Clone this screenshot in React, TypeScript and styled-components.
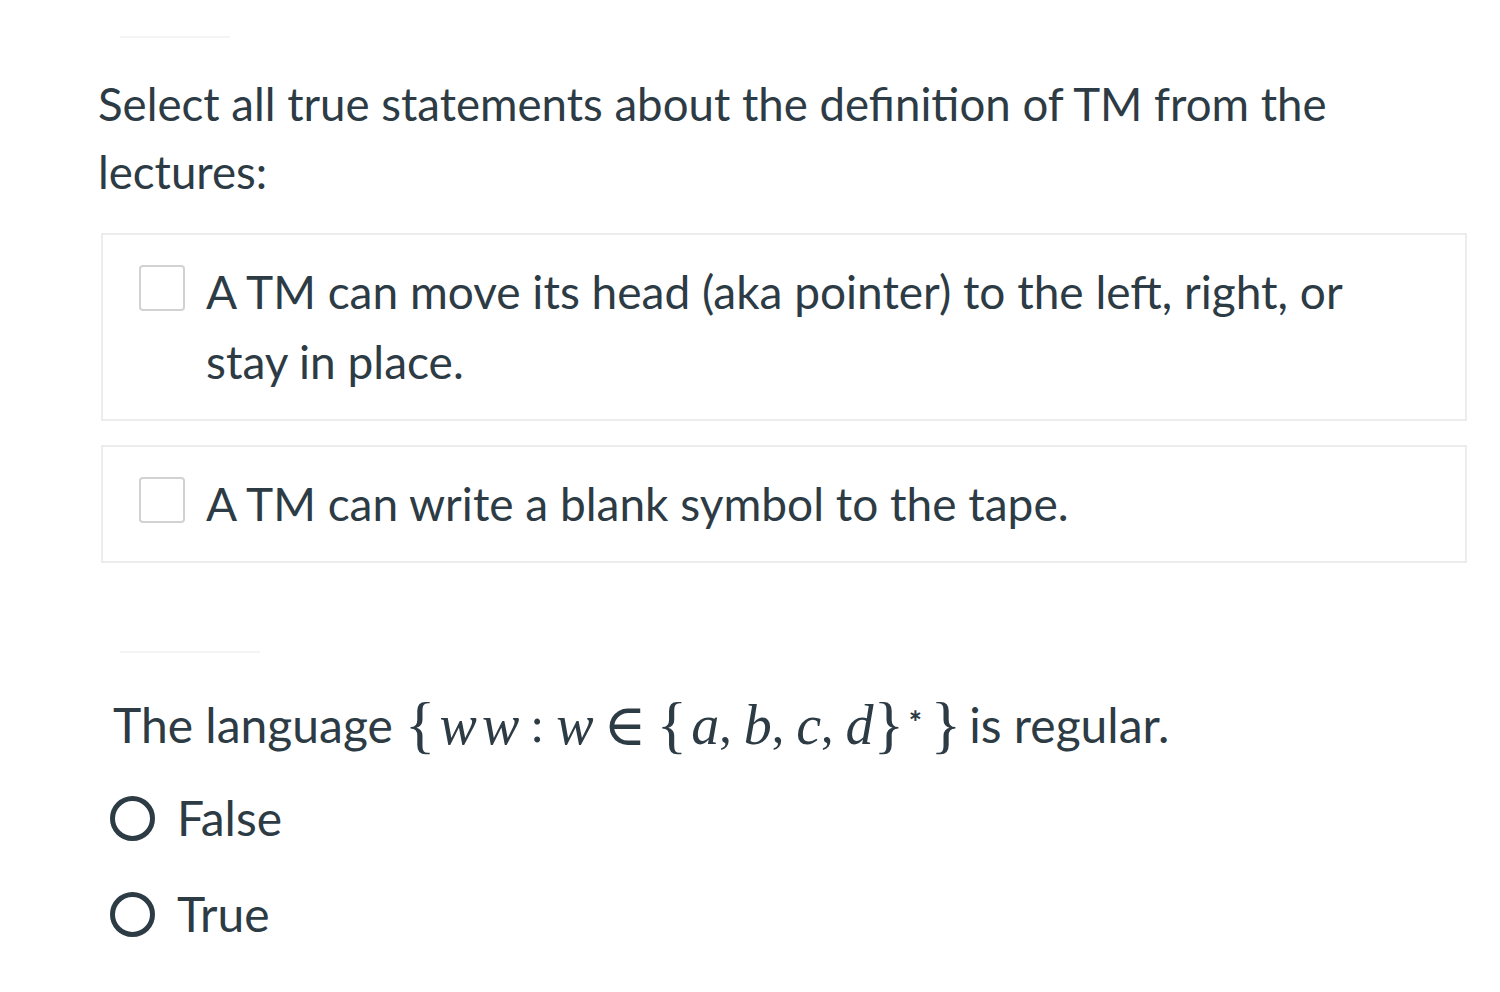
import React from "react";
import styled, { createGlobalStyle } from "styled-components";

const Global = createGlobalStyle`
  html, body { margin: 0; padding: 0; background: #ffffff; }
  body { font-family: Lato, "Open Sans", sans-serif; color: #2d3b45; }
`;

const Page = styled.div`
  width: 1500px;
  height: 992px;
  overflow: hidden;
  display: flex;
  flex-direction: column;
  padding: 36px 0 0 98px;
  box-sizing: border-box;
`;

const FaintRule = styled.div<{ $w: number; $ml: number }>`
  width: ${(p) => p.$w}px;
  margin-left: ${(p) => p.$ml}px;
  height: 2px;
  background: #f4f4f4;
`;

const QuestionText = styled.div`
  font-size: 45.6px;
  line-height: 68px;
  width: 1270px;
  margin-top: 32px;
`;

const Options = styled.div`
  display: flex;
  flex-direction: column;
  gap: 24px;
  margin-top: 27px;
  margin-left: 3px;
  width: 1366px;
`;

const OptionBox = styled.label`
  display: flex;
  align-items: flex-start;
  gap: 21px;
  border: 2px solid #ececec;
  padding: 22px 36px 22px 36px;
  box-sizing: border-box;
`;

const CheckBox = styled.span`
  flex: none;
  width: 46px;
  height: 46px;
  box-sizing: border-box;
  border: 2px solid #d2d2d2;
  border-radius: 4px;
  margin-top: 8px;
  background: #fff;
`;

const OptionText = styled.span`
  font-size: 46px;
  line-height: 70px;
  max-width: 1190px;
`;

const Question2 = styled.div`
  margin-top: 88px;
  margin-left: 22px;
  display: flex;
  flex-direction: column;
`;

const Q2Text = styled.div`
  font-size: 48px;
  line-height: 68px;
  margin-top: 38px;
  margin-left: -7px;
  display: flex;
  align-items: center;
  white-space: pre;
`;

const MathExpr = styled.span`
  display: inline-flex;
  align-items: center;
  margin: 0 8px 0 12px;
  color: #2d3b45;
`;

const MI = styled.i<{ $sp?: number }>`
  font-style: italic;
  font-family: "Liberation Serif", serif;
  font-size: 56px;
  letter-spacing: ${(p) => p.$sp ?? 0}px;
  line-height: 1;
`;

const MO = styled.span<{ $size?: number; $ml?: number; $mr?: number }>`
  font-family: "Liberation Serif", "DejaVu Serif", serif;
  font-size: ${(p) => p.$size ?? 50}px;
  line-height: 1;
  margin: 0 ${(p) => p.$mr ?? 0}px 0 ${(p) => p.$ml ?? 0}px;
`;

const Rel = styled.span<{ $mx: number }>`
  font-family: "DejaVu Serif", serif;
  font-size: 58px;
  line-height: 1;
  margin: 0 ${(p) => p.$mx}px;
`;

const Star = styled.span`
  align-self: flex-start;
  font-family: "DejaVu Sans", sans-serif;
  font-weight: bold;
  font-size: 17px;
  line-height: 1;
  margin: 14px 8px 0 4px;
`;

const Radios = styled.div`
  display: flex;
  flex-direction: column;
  gap: 50px;
  margin-top: 36px;
  margin-left: -10px;
`;

const RadioRow = styled.label`
  display: flex;
  align-items: center;
  gap: 22px;
  font-size: 48px;
  line-height: 46px;
`;

const RadioCircle = styled.span`
  flex: none;
  width: 45px;
  height: 45px;
  box-sizing: border-box;
  border: 5px solid #2d3b45;
  border-radius: 50%;
`;

export default function App() {
  return (
    <>
      <Global />
      <Page>
        <FaintRule $w={110} $ml={22} />
        <QuestionText>
          Select all true statements about the definition of TM from the lectures:
        </QuestionText>
        <Options>
          <OptionBox>
            <CheckBox />
            <OptionText>
              A TM can move its head (aka pointer) to the left, right, or stay in place.
            </OptionText>
          </OptionBox>
          <OptionBox>
            <CheckBox />
            <OptionText>A TM can write a blank symbol to the tape.</OptionText>
          </OptionBox>
        </Options>
        <Question2>
          <FaintRule $w={140} $ml={0} />
          <Q2Text>
            The language
            <MathExpr>
              <MO $size={64} $mr={4}>{"{"}</MO>
              <MI $sp={5}>ww</MI>
              <MO $ml={6} $mr={12}>:</MO>
              <MI>w</MI>
              <Rel $mx={10}>∈</Rel>
              <MO $size={64} $mr={4}>{"{"}</MO>
              <MI>a</MI>
              <MO $mr={12}>,</MO>
              <MI>b</MI>
              <MO $mr={12}>,</MO>
              <MI>c</MI>
              <MO $mr={12}>,</MO>
              <MI>d</MI>
              <MO $size={64}>{"}"}</MO>
              <Star>∗</Star>
              <MO $size={64}>{"}"}</MO>
            </MathExpr>
            is regular.
          </Q2Text>
          <Radios>
            <RadioRow>
              <RadioCircle />
              False
            </RadioRow>
            <RadioRow>
              <RadioCircle />
              True
            </RadioRow>
          </Radios>
        </Question2>
      </Page>
    </>
  );
}
